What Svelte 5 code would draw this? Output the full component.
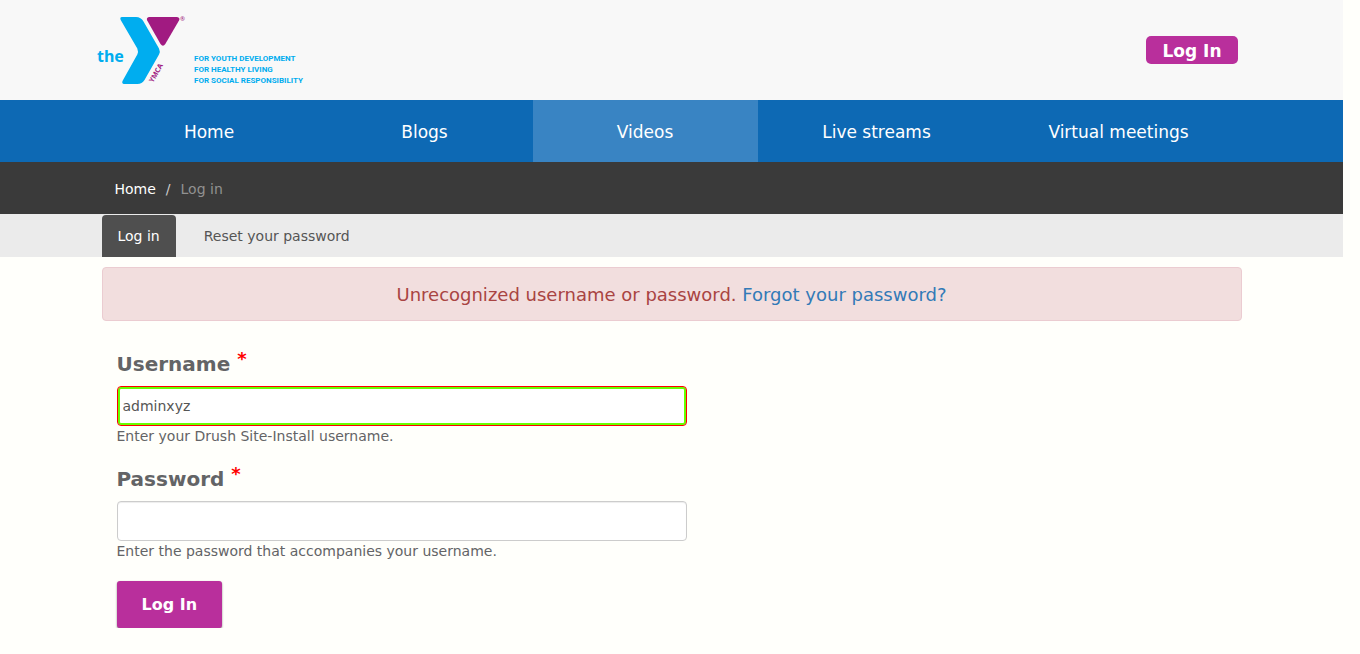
<script>
  let username = $state('adminxyz');
  let password = $state('');

  const menu = ['Home', 'Blogs', 'Videos', 'Live streams', 'Virtual meetings'];
  const active = 'Videos';
</script>

<div class="page">
  <header class="top">
    <div class="container top-inner">
      <a class="logo" href="#home" aria-label="Home">
        <svg viewBox="95 13 212 74" width="212" height="74">
          <path
            d="M122 17H136Q141 17 143.500 21.500L159 48.500Q160.500 51.500 159 54.500L144.500 80Q142 84 137.500 84H124Q121.500 83.500 122.500 81L137.300 54.500Q138.600 51.500 137.300 48.500L120.700 20Q119.500 17.200 122 17Z"
            fill="#00adef"
          />
          <path
            d="M149 17H177Q180.500 17.500 179 20.500L165.300 44Q163 47.500 160.500 44L147.200 20.500Q146 17.500 149 17Z"
            fill="#a11a81"
          />
          <text class="the" x="97" y="62">the</text>
          <text class="ymca" transform="translate(153 83) rotate(-60)">YMCA</text>
          <text class="reg" x="180" y="21">®</text>
          <text class="tag" x="194" y="61">FOR YOUTH DEVELOPMENT</text>
          <text class="tag" x="194" y="72">FOR HEALTHY LIVING</text>
          <text class="tag" x="194" y="83">FOR SOCIAL RESPONSIBILITY</text>
        </svg>
      </a>
      <a class="login-link" href="#login">Log In</a>
    </div>
  </header>

  <nav class="menu" aria-label="Main">
    <div class="container menu-inner">
      {#each menu as item}
        <a href="#{item}" class:active={item === active}>{item}</a>
      {/each}
    </div>
  </nav>

  <nav class="crumbs" aria-label="Breadcrumb">
    <ol class="container">
      <li><a href="#home">Home</a></li>
      <li class="sep">/</li>
      <li class="current">Log in</li>
    </ol>
  </nav>

  <nav class="tabs" aria-label="Account">
    <div class="container tabs-inner">
      <a class="tab selected" href="#login">Log in</a>
      <a class="tab" href="#reset">Reset your password</a>
    </div>
  </nav>

  <main class="container">
    <div class="alert" role="alert">
      Unrecognized username or password. <a href="#reset">Forgot your password?</a>
    </div>

    <form onsubmit={(e) => e.preventDefault()}>
      <div class="field">
        <label for="name">Username <span class="star">*</span></label>
        <input id="name" class="error" type="text" bind:value={username} />
        <p>Enter your Drush Site-Install username.</p>
      </div>
      <div class="field">
        <label for="pass">Password <span class="star">*</span></label>
        <input id="pass" type="password" bind:value={password} />
        <p>Enter the password that accompanies your username.</p>
      </div>
      <button type="submit">Log In</button>
    </form>
  </main>
</div>

<style>
  :global(body) {
    background: #fffffb;
  }
  .page {
    margin-right: 17px;
    font-family: Verdana, 'DejaVu Sans', sans-serif;
    font-size: 14px;
    line-height: 20px;
    color: #636466;
  }
  .page * {
    box-sizing: border-box;
  }
  a {
    text-decoration: none;
  }
  .container {
    width: 100%;
    max-width: 1140px;
    margin: 0 auto;
  }
  .top {
    background: #f8f8f8;
  }
  .top-inner {
    display: flex;
    justify-content: space-between;
    align-items: center;
    height: 100px;
    padding-right: 4px;
  }
  .logo {
    margin-left: -7px;
    line-height: 0;
  }
  .the {
    font: 700 16px 'Noto Sans', sans-serif;
    fill: #00adef;
  }
  .ymca {
    font: 700 7px 'Noto Sans', sans-serif;
    fill: #a11a81;
  }
  .reg {
    font: 6px 'Noto Sans', sans-serif;
    fill: #a11a81;
  }
  .tag {
    font: 700 8px Roboto, sans-serif;
    fill: #00adef;
  }
  .login-link {
    padding: 5px 16px 3px;
    border-radius: 5px;
    background: #b92f9c;
    color: #fff;
    font-size: 17px;
    font-weight: 700;
  }
  .menu {
    background: #0d69b4;
  }
  .menu-inner {
    display: grid;
    grid-template-columns: 215fr 216fr 225fr 238fr 246fr;
  }
  .menu a {
    padding: 20px 0 18px;
    color: #fff;
    font-size: 17px;
    line-height: 24px;
    text-align: center;
  }
  .menu .active {
    background: #3984c3;
  }
  .crumbs {
    background: #3a3a3a;
  }
  .crumbs ol {
    display: flex;
    padding: 17px 13px 15px;
    list-style: none;
  }
  .crumbs a {
    color: #fff;
  }
  .sep {
    padding: 0 10px;
    color: #ccc;
  }
  .current {
    color: #919191;
  }
  .tabs {
    padding-top: 1px;
    background: #ebebeb;
  }
  .tabs-inner {
    display: flex;
    gap: 12px;
  }
  .tab {
    padding: 11px 16px;
    border-radius: 4px 4px 0 0;
    color: #555;
  }
  .selected {
    background: #4f4f4f;
    color: #fff;
  }
  .alert {
    margin: 10px 0 26px;
    padding: 16px 15px 14px;
    border: 1px solid #ebccd1;
    border-radius: 4px;
    background: #f2dede;
    color: #a94442;
    font-size: 18px;
    line-height: 22px;
    text-align: center;
  }
  .alert a {
    color: #337ab7;
  }
  form {
    padding: 0 15px;
  }
  .field {
    max-width: 570px;
    margin-bottom: 15px;
  }
  label {
    display: block;
    padding-top: 1px;
    margin-bottom: 6px;
    font-size: 20px;
    font-weight: 700;
    line-height: 32px;
  }
  .star {
    color: #f00;
    font-size: 18px;
    line-height: 1;
    vertical-align: 6px;
  }
  input {
    display: block;
    width: 100%;
    height: 40px;
    padding: 0 5px;
    border: 1px solid #ccc;
    border-radius: 4px;
    outline: none;
    background: #fff;
    box-shadow: inset 0 1px 1px rgba(0, 0, 0, 0.075);
    color: #555;
    font: inherit;
  }
  .error {
    border-color: #f00;
    box-shadow: inset 0 0 0 2px #6f0;
  }
  p {
    margin: 0;
    line-height: 21px;
  }
  button {
    margin-top: 4px;
    padding: 13px 25px 12px;
    border: 0;
    border-radius: 3px;
    background: #b92f9c;
    box-shadow: 0 1px 2px rgba(0, 0, 0, 0.5);
    color: #fff;
    font: 700 16px/22px Verdana, 'DejaVu Sans', sans-serif;
  }
</style>
